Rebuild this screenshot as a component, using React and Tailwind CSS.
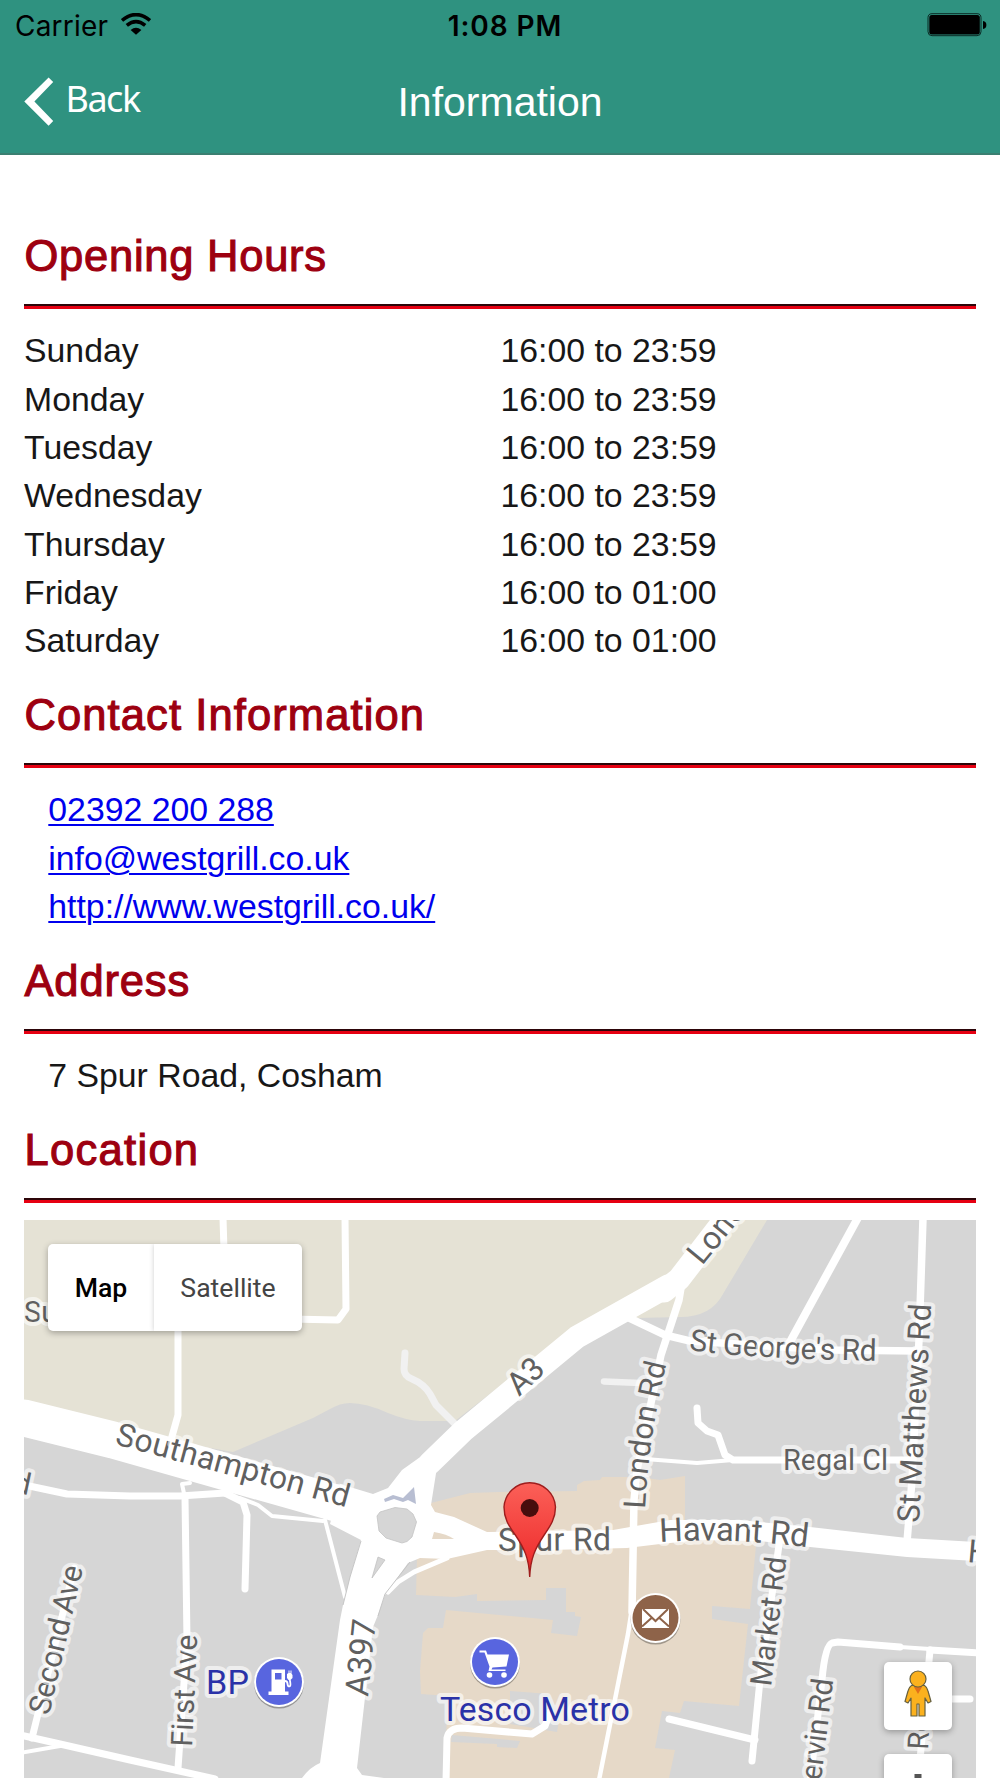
import { clsx } from 'clsx'

const hours = [
  { day: 'Sunday', time: '16:00 to 23:59' },
  { day: 'Monday', time: '16:00 to 23:59' },
  { day: 'Tuesday', time: '16:00 to 23:59' },
  { day: 'Wednesday', time: '16:00 to 23:59' },
  { day: 'Thursday', time: '16:00 to 23:59' },
  { day: 'Friday', time: '16:00 to 01:00' },
  { day: 'Saturday', time: '16:00 to 01:00' }
]

const contacts = [
  { label: '02392 200 288', href: 'tel:02392200288' },
  { label: 'info@westgrill.co.uk', href: 'mailto:info@westgrill.co.uk' },
  { label: 'http://www.westgrill.co.uk/', href: 'http://www.westgrill.co.uk/' }
]

// Street centre lines: path and width
const streets = [
  { d: 'M24 1418L113 1440L350 1507', w: 37 },
  { d: 'M430 1463L463 1431L577 1337L668 1286', w: 23 },
  { d: 'M664 1291L679 1279L736 1205', w: 23 },
  { d: 'M682 1282L679 1300L661 1355L637 1470L634 1500L632 1612', w: 7.5 },
  { d: 'M632 1608L628 1634L599 1780', w: 4.5 },
  { d: 'M625 1316L665 1335L690 1341L830 1350L918 1351', w: 7.5 },
  { d: 'M860 1214L790 1342', w: 8 },
  { d: 'M923 1218L919 1340L912 1480L907 1542', w: 7.5 },
  { d: 'M697 1408L698 1423L707 1431L718 1435L725 1455L733 1460L910 1460', w: 7 },
  { d: 'M645 1459L697 1463L733 1460', w: 4 },
  { d: 'M223 1218L224 1250', w: 7 },
  { d: 'M345 1218L346 1309L338 1320L290 1319', w: 7 },
  { d: 'M178 1310L178 1415L171 1440', w: 7 },
  { d: 'M20 1484L67 1494L130 1496L180 1496L225 1493', w: 7 },
  { d: 'M190 1483L182 1484L185 1498', w: 4 },
  { d: 'M185 1498L187 1640L178 1768', w: 7 },
  { d: 'M225 1493L243 1502L247 1515L245 1589', w: 7 },
  { d: 'M240 1498L258 1505L272 1516L323 1521', w: 4 },
  { d: 'M325 1520L345 1597', w: 4 },
  { d: 'M20 1735L60 1744L130 1760L215 1779', w: 7 },
  { d: 'M20 1753L60 1746', w: 4 },
  { d: 'M32 1738L74 1568', w: 7 },
  { d: 'M388 1592L398 1582L414 1572L447 1558', w: 5 },
  { d: 'M446 1782L447 1738Q449 1728 462 1728L532 1734L545 1726L550 1712', w: 7 },
  { d: 'M779 1545L760 1680L752 1761', w: 7 },
  { d: 'M669 1719L755 1740', w: 7 },
  { d: 'M810 1782L822 1680Q825 1645 832 1643L838 1642L900 1647', w: 7 },
  { d: 'M900 1647L930 1649', w: 4 },
  { d: 'M930 1650L980 1653', w: 7 },
  { d: 'M930 1650L918 1782', w: 7 },
  { d: 'M940 1699L970 1699', w: 7 }
]

// Each name runs along its own baseline path
const streetNames = [
  { id: 'southampton', text: 'Southampton Rd', d: 'M114 1444L240 1478L356 1510', size: 32, length: 241 },
  { id: 'a3', text: 'A3', d: 'M519 1397L551 1367', size: 32, length: 38 },
  { id: 'london-top', text: 'London Rd', d: 'M702 1266L797 1150', size: 32 },
  { id: 'london', text: 'London Rd', d: 'M645 1509Q649 1430 670 1350', size: 30.5, length: 147 },
  { id: 'st-george', text: "St George's Rd", d: 'M689 1350Q750 1359 890 1361', size: 30, length: 188 },
  { id: 'st-matthews', text: 'St Matthews Rd', d: 'M919 1523L932 1290', size: 31, length: 219 },
  { id: 'regal', text: 'Regal Cl', d: 'M783 1470L930 1470', size: 29, length: 105 },
  { id: 'spur', text: 'Spur Rd', d: 'M498 1551L640 1550', size: 32, length: 113 },
  { id: 'havant', text: 'Havant Rd', d: 'M660 1542Q735 1537 820 1549', size: 33, length: 148 },
  { id: 'havant-next', text: 'Havant Rd', d: 'M967 1562L1100 1574', size: 32 },
  { id: 'market', text: 'Market Rd', d: 'M771 1687L788 1545', size: 30, length: 130 },
  { id: 'ervin', text: 'ervin Rd', d: 'M821 1781L835 1665', size: 30, length: 102 },
  { id: 'hidden-road', text: 'Rd', d: 'M928 1750L931 1690', size: 29 },
  { id: 'first', text: 'First Ave', d: 'M192 1747L198 1620', size: 30, length: 112 },
  { id: 'second', text: 'Second Ave', d: 'M49 1716L86 1555', size: 30.5, length: 152 },
  { id: 'a397', text: 'A397', d: 'M368 1697L378 1600', size: 33, length: 77 },
  { id: 'su', text: 'Su', d: 'M24 1322L90 1322', size: 29 },
  { id: 'west', text: 'Rd', d: 'M-6 1488L60 1502', size: 30 }
]

function StatusBar() {
  return (
    <div className="grid h-[51px] grid-cols-3 items-center pl-[15px] pr-[13px] font-['Inter',sans-serif] text-[28px] leading-none text-black">
      <div className="flex items-center gap-[13px]">
        <span className="tracking-[0.2px]">Carrier</span>
        <svg viewBox="121 13 30 22" className="h-[22px] w-[30px] -translate-y-[2px]">
          <g fill="none" stroke="#000" strokeWidth="3.6">
            <path d="M122 20.4Q136 8.8 150 20.4" />
            <path d="M126.8 25.4Q136 17.8 145.2 25.4" />
          </g>
          <path d="M130.6 30Q136 25.4 141.4 30L136 34.8Z" />
        </svg>
      </div>
      <span className="pl-[8px] text-center text-[28px] font-semibold tracking-[0.9px]">
        1:08 PM
      </span>
      <svg viewBox="927 13 60 24" className="h-6 w-[60px] -translate-y-px justify-self-end">
        <rect x="928" y="13.7" width="53" height="22" rx="4" fill="none" stroke="#0b2a24" />
        <rect x="929.3" y="15" width="50.5" height="19.5" rx="2.5" />
        <path d="M983 21Q986.4 21.5 986.4 25Q986.4 28.5 983 29Z" />
      </svg>
    </div>
  )
}

function NavBar() {
  return (
    <nav className="grid h-[102px] grid-cols-[1fr_auto_1fr] text-white">
      <a href="#" className="flex items-start pl-[24px] pt-[26px]">
        <svg viewBox="24 77 30 50" className="h-[50px] w-[30px]" fill="#fff">
          <path d="M48.6 77.4L53.2 82L34.4 101.5L53.2 121L48.6 125.8L24.3 101.5Z" />
        </svg>
        <span className="ml-[11.5px] mt-[2px] font-['Noto_Sans',sans-serif] text-[36px] leading-[40px] tracking-[-1.5px]">
          Back
        </span>
      </a>
      <h1 className="mt-[26px] text-[41px] leading-[50px]">Information</h1>
      <span />
    </nav>
  )
}

function Section({ title, tracking, indent, children }) {
  return (
    <section className="mb-[20.3px]">
      <h2
        className={clsx(
          'h-[60px] pl-[0.5px] text-[43.5px] leading-[60px] text-[#9d0010] [-webkit-text-stroke:1.1px_#9d0010]',
          tracking
        )}
      >
        {title}
      </h2>
      <div className="mt-[18.2px] mb-[17.4px] h-[5px] border-t-2 border-b-[3px] border-t-[#2d0509] border-b-[#e60012]" />
      <div className={clsx('text-[33.8px] leading-[48.3px]', indent && 'pl-[24.3px]')}>
        {children}
      </div>
    </section>
  )
}

function PoiMarker({ x, y, color, children }) {
  return (
    <g transform={`translate(${x} ${y})`}>
      <circle cy="1.6" r="25" fill="#000" opacity="0.3" />
      <circle r="25" fill="#fff" />
      <circle r="23" fill={color} />
      {children}
    </g>
  )
}

function MapCanvas() {
  return (
    <svg
      viewBox="24 1220 952 558"
      className="col-start-1 row-start-1 h-[558px] w-full font-['Roboto',sans-serif]"
    >
      <rect x="24" y="1220" width="952" height="558" fill="#d6d6d6" />

      {/* park */}
      <path
        fill="#e5e2d5"
        d="M24 1220H767L723 1294Q711 1317 680 1317L637 1318L585 1320L455 1421H420Q405 1420 388 1413Q366 1403 350 1403Q340 1403 330 1409L313 1418L233 1452L24 1415Z"
      />

      {/* shopping area */}
      <g fill="#e6d9c8">
        <path d="M431 1503L470 1493L500 1492L577 1491V1485L584 1481L600 1480L602 1477H640L660 1480L685 1476V1545H431Z" />
        <path d="M417 1556L500 1535H757L750 1609L712 1606V1619L748 1624L739 1706L684 1701L680 1713L662 1711L655 1748L675 1750L669 1778H444L448 1696L421 1694L420 1671L423 1633L428 1628L443 1628L446 1610L553 1620L551 1633L577 1636L581 1617L575 1616V1612H566V1588H546V1600L477 1601V1594L455 1597L416 1595Z" />
      </g>
      <g fill="#d6d6d6">
        <path d="M510 1691L550 1694L560 1715L557 1732L510 1724Z" />
        <path d="M452 1735L520 1741L517 1748L497 1747V1744L451 1742Z" />
      </g>

      {/* footpaths */}
      <g fill="none" stroke="#f1f1f1" strokeLinecap="round" strokeLinejoin="round">
        <path strokeWidth="7" d="M405 1353L404 1369Q404 1376 412 1379Q424 1384 430 1394L436 1405L457 1426" />
        <path strokeWidth="6.5" d="M604 1381.5L640 1383" />
      </g>

      <g fill="none" stroke="#fff" strokeLinecap="round" strokeLinejoin="round">
        {streets.map(street => (
          <path key={street.d} d={street.d} strokeWidth={street.w} />
        ))}
      </g>

      {/* roundabout, Spur Rd, Havant Rd and A397 */}
      <path
        fill="#fff"
        d="M340 1484L373 1494L388 1488L402 1470L423 1455L437 1467L431 1505L435 1512L454 1517L487 1532L613 1530L670 1520L740 1520L810 1527L907 1538L976 1542V1561L907 1557L810 1547L760 1541L700 1540L660 1544L627 1548L550 1550L487 1550L447 1559L420 1558L408 1563L385 1595L378 1615L373 1627L357 1768L362 1775L384 1778H302Q310 1767 320 1763L340 1620L343 1605L350 1577L361 1540L330 1524Z"
      />
      <path
        fill="#d6d6d6"
        stroke="#c4c4c4"
        strokeWidth="0.8"
        d="M377 1516L380 1512L395 1507.5L407 1509L413 1514L416.5 1522L412 1537L407 1541.5L402 1543L386 1538L379 1531Z"
      />
      <path fill="#d6d6d6" stroke="#bdbdbd" strokeWidth="0.7" d="M378 1557L385 1560L372 1578Z" />
      <path fill="#e6d9c8" d="M434 1532Q447 1534 454 1539H432Z" />
      <path fill="#b8bed2" d="M384 1499L393 1495L403 1498L414 1487L416 1504L408 1500L403 1502L394 1499L385 1502Z" />
      <path fill="none" stroke="#c6c6c6" d="M361 1541L350 1577L343 1605M410 1562L385 1594L378 1616" />

      <defs>
        {streetNames.map(name => (
          <path key={name.id} id={name.id} d={name.d} />
        ))}
        <linearGradient id="pin-fill" x1="0" y1="0" x2="0" y2="1">
          <stop offset="0" stopColor="#fb6058" />
          <stop offset="0.75" stopColor="#f03534" />
          <stop offset="1" stopColor="#d92525" />
        </linearGradient>
      </defs>

      <g
        fill="#606060"
        stroke="#fff"
        strokeOpacity="0.6"
        strokeWidth="8"
        strokeLinejoin="round"
        className="[paint-order:stroke]"
      >
        {streetNames.map(name => (
          <text key={name.id} fontSize={name.size}>
            <textPath href={`#${name.id}`} textLength={name.length}>
              {name.text}
            </textPath>
          </text>
        ))}
        <g fill="#2a32a8">
          <text x="206" y="1693.5" fontSize="34" textLength="43">BP</text>
          <text x="440" y="1720.5" fontSize="34" textLength="190">Tesco Metro</text>
        </g>
      </g>

      <PoiMarker x={279} y={1682} color="#5865df">
        <path fill="#fff" d="M-7.5 -12.5H6V9.5H9.5V13H-10.5V9.5H-7.5Z" />
        <path fill="#5865df" d="M-4 -9H2.5V-2.5H-4Z" />
        <path fill="none" stroke="#fff" strokeWidth="1.8" d="M6 -1Q8.5 -1 8.5 2Q9 5.5 11 4Q12 3 10.8 -2" />
        <path fill="#fff" d="M8 -8L9.5 -9V-11.5H10.5V-9H11.5V-11.5H12.5V-8.5L13.5 -7V-4L11.5 -2H9.5L8 -4Z" />
      </PoiMarker>
      <PoiMarker x={495} y={1662} color="#5865df">
        <path
          fill="#fff"
          d="M-15.5 -11.5H-9L-7.5 -7.5H14L11.5 4.5L-2.5 5.5L-3.5 7.5H10.5V9H-6.5L-5.5 4.5L-10.5 -9.5H-15.5Z"
        />
        <circle cx="-5.5" cy="13" r="2.8" fill="#fff" />
        <circle cx="9" cy="13" r="2.8" fill="#fff" />
      </PoiMarker>
      <PoiMarker x={655.5} y={1618} color="#8e6349">
        <rect x="-13.5" y="-9" width="27" height="19" fill="#fff" />
        <path
          fill="none"
          stroke="#8e6349"
          strokeWidth="2"
          d="M-12.5 -9L0 3L12.5 -9M-13.5 8.5L-4 0M13.5 8.5L4 0"
        />
      </PoiMarker>

      {/* restaurant pin */}
      <path
        fill="url(#pin-fill)"
        stroke="#9e1d1d"
        strokeWidth="1.4"
        d="M529.7 1577C529 1558 524 1548 516 1536C508 1525 504 1518 504 1507A25.8 25.8 0 0 1 555.5 1507C555.5 1518 551 1525 543.5 1536C535.5 1548 530.5 1558 529.7 1577Z"
      />
      <circle cx="529.7" cy="1508" r="9" fill="#470d0d" />
    </svg>
  )
}

function Pegman() {
  return (
    <svg viewBox="-14 -24 28 48" className="h-12 w-7 -translate-y-[2px]" stroke="#66603f" strokeWidth="1.2" strokeLinejoin="round">
      <path
        fill="#fbb11e"
        d="M-6.5 -8.5H6.5Q9 -7 10 -3L13 7.5L10 9L7 4V22H1V10H-1V22H-7V4L-10 9L-13 7.5L-10 -3Q-9 -7 -6.5 -8.5Z"
      />
      <path fill="#e2701a" stroke="none" d="M-4 -7H4L0 0Z" />
      <circle cy="-15" r="8" fill="#fbb11e" />
    </svg>
  )
}

function LocationMap() {
  return (
    <div className="-mt-[0.4px] grid h-[558px] overflow-hidden font-['Roboto',sans-serif]">
      <MapCanvas />
      <div className="z-10 col-start-1 row-start-1 flex items-start justify-between px-6">
        <div className="mt-6 flex h-[87px] overflow-hidden rounded-[5px] bg-white text-[26.6px] leading-[83px] shadow-[0_2px_6px_rgba(0,0,0,0.3)]">
          <button className="w-[106px] font-medium text-black">Map</button>
          <button className="w-[148px] text-[#444] shadow-[0_0_5px_rgba(0,0,0,0.2)]">
            Satellite
          </button>
        </div>
        <div className="mt-[442px] flex flex-col gap-6">
          <button className="flex size-[68px] items-center justify-center rounded-[5px] bg-white shadow-[0_2px_6px_rgba(0,0,0,0.3)]">
            <Pegman />
          </button>
          <button className="flex size-[68px] items-start justify-center rounded-[5px] bg-white pt-5 shadow-[0_2px_6px_rgba(0,0,0,0.3)]">
            <svg viewBox="0 0 28 28" className="size-7 fill-[#555]">
              <path d="M10.5 0H17.5V10.5H28V17.5H17.5V28H10.5V17.5H0V10.5H10.5Z" />
            </svg>
          </button>
        </div>
      </div>
    </div>
  )
}

export default function App() {
  return (
    <div className="h-[1778px] overflow-hidden bg-white font-['Liberation_Sans',Arial,sans-serif] text-[#171717]">
      <header className="h-[155px] border-b-2 border-[#3b7f71] bg-[#2f9280]">
        <StatusBar />
        <NavBar />
      </header>

      <main className="px-6 pt-[70.8px]">
        <Section title="Opening Hours" tracking="tracking-[0.75px]">
          {hours.map(({ day, time }) => (
            <div key={day} className="grid grid-cols-2">
              <span>{day}</span>
              <span className="pl-[0.5px]">{time}</span>
            </div>
          ))}
        </Section>

        <Section title="Contact Information" tracking="tracking-[1.1px]" indent>
          {contacts.map(({ label, href }) => (
            <div key={label}>
              <a
                href={href}
                className="text-[#0000ee] underline decoration-2 underline-offset-[3px]"
              >
                {label}
              </a>
            </div>
          ))}
        </Section>

        <Section title="Address" tracking="tracking-[0.85px]" indent>
          7 Spur Road, Cosham
        </Section>

        <Section title="Location" tracking="tracking-[1.3px]">
          <LocationMap />
        </Section>
      </main>
    </div>
  )
}
